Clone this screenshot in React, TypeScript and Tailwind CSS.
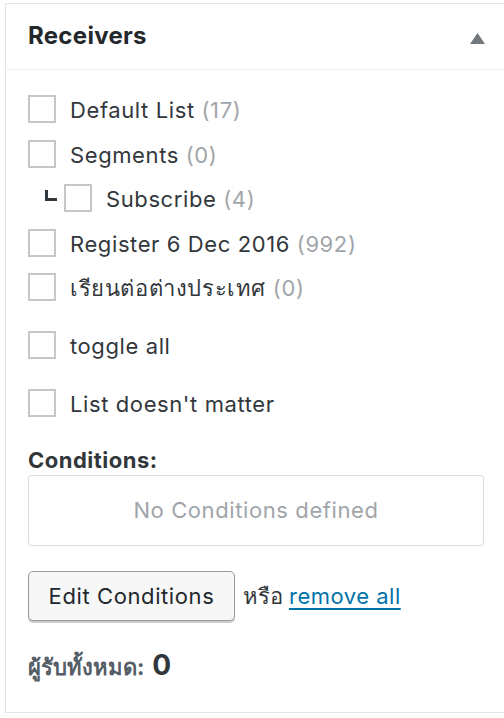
import React from "react";

function Box() {
  return (
    <span className="block w-[28px] h-[28px] shrink-0 border-2 border-[#c5c8cb] bg-white" />
  );
}

function Row({ label, count, indent }: { label: string; count?: string; indent?: boolean }) {
  return (
    <div className="flex items-center h-[28px]">
      {indent && (
        <span className="w-[36px] shrink-0 flex justify-end pr-[7px]">
          <span className="block w-[12px] h-[11px] border-l-[3px] border-b-[3px] border-[#32373c] -mt-[5px]" />
        </span>
      )}
      <Box />
      <span className="ml-[14px] mt-[2px] text-[22px] tracking-[0.6px] leading-none text-[#32373c] whitespace-nowrap">
        {label}
        {count !== undefined && <span className="text-[#a0a5aa]"> ({count})</span>}
      </span>
    </div>
  );
}

export default function App() {
  return (
    <div className="w-[504px] h-[718px] bg-white overflow-hidden pt-[3px] pl-[5px] font-['Inter','Noto_Sans','DejaVu_Sans',sans-serif]">
      <div className="w-[502px] h-[710px] border border-[#e2e4e7]">
        <div className="h-[66px] border-b border-[#eeeeee] flex items-center justify-between pl-[22px] pr-[21px]">
          <span className="text-[24px] tracking-[0.3px] font-bold text-[#23282d] -mt-[2px]">Receivers</span>
          <svg width="15" height="11" viewBox="0 0 15 11" className="mt-[4px]">
            <polygon points="7.5,0 15,11 0,11" fill="#72777c" />
          </svg>
        </div>
        <div className="px-[22px] pt-[25px]">
          <div className="flex flex-col gap-[16.5px]">
            <Row label="Default List" count="17" />
            <Row label="Segments" count="0" />
            <Row label="Subscribe" count="4" indent />
            <Row label="Register 6 Dec 2016" count="992" />
            <Row label="เรียนต่อต่างประเทศ" count="0" />
          </div>
          <div className="flex flex-col gap-[30px] mt-[30px]">
            <Row label="toggle all" />
            <Row label="List doesn't matter" />
          </div>
          <div className="mt-[31px] text-[22px] tracking-[0.5px] leading-[24px] font-bold text-[#32373c]">Conditions:</div>
          <div className="mt-[3px] h-[71px] border border-[#dddddd] rounded-[3px] flex items-center justify-center text-[22px] tracking-[0.6px] text-[#a0a5aa]">
            No Conditions defined
          </div>
          <div className="mt-[25px] flex items-center">
            <button className="w-[207px] h-[50px] border border-[#999999] rounded-[5px] bg-[#f7f7f7] shadow-[0_2px_0_#cccccc] text-[22px] tracking-[0.6px] text-[#23282d]">
              Edit Conditions
            </button>
            <span className="ml-[8px] text-[22px] text-[#32373c]">หรือ</span>
            <a href="#" className="ml-[6px] text-[22px] tracking-[0.5px] text-[#0073aa] underline underline-offset-[4px]">remove all</a>
          </div>
          <div className="mt-[23px] flex items-baseline text-[#32373c]">
            <span className="text-[22px] font-bold text-[#555d66]">ผู้รับทั้งหมด:</span>
            <span className="ml-[8px] text-[28px] font-bold">0</span>
          </div>
        </div>
      </div>
    </div>
  );
}
